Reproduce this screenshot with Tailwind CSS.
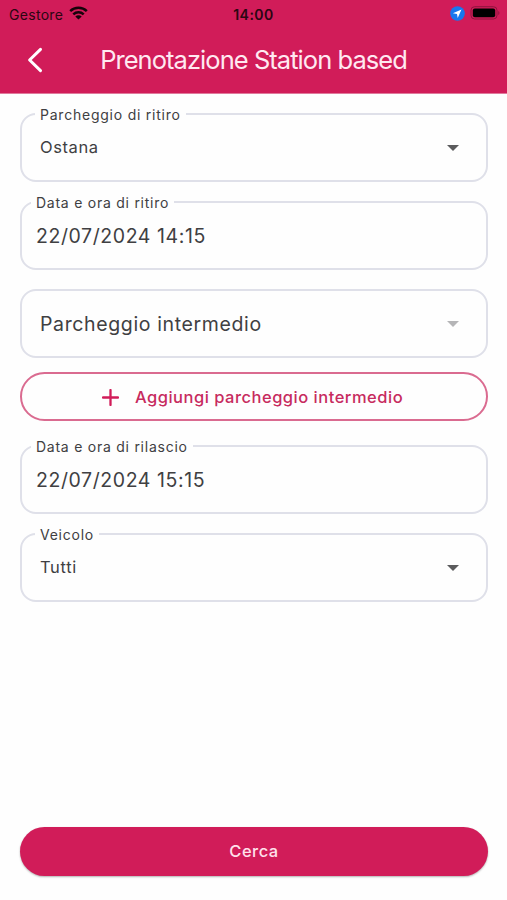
<!DOCTYPE html>
<html lang="it">
<head>
<meta charset="utf-8">
<title>Prenotazione Station based</title>
<script src="https://cdn.jsdelivr.net/npm/@tailwindcss/browser@4"></script>
</head>
<body class="bg-[#fefefe] font-[Inter,sans-serif] text-[#404042]">
<div class="flex h-[900px] w-[507px] flex-col overflow-hidden">
  <header class="h-[94px] shrink-0 border-b border-[#e0799c] bg-[#d11c59]">
    <div class="grid h-7 grid-cols-3 items-center pl-[9px] pr-[7px] text-[#2b0612]">
      <div class="flex items-center gap-[6px]">
        <span class="whitespace-nowrap text-[14px] tracking-[0.3px]">Gestore</span>
        <svg class="-mt-[3px] h-[14px] w-[19px]" viewBox="0 0 19 14" fill="none" stroke="#16030a" stroke-width="2.5"><path d="M1.2 5.1C5.8.6 13.2.6 17.8 5.1"/><path d="M4.3 8.3c2.9-2.8 7.5-2.8 10.4 0"/><path d="M9.5 13.6 6.3 10.5c1.8-1.6 4.6-1.6 6.4 0z" fill="#16030a" stroke="none"/></svg>
      </div>
      <div class="pr-[2px] text-center text-[14px] font-semibold tracking-[0.5px]">14:00</div>
      <div class="-mt-[2px] flex items-center justify-end gap-[5px]">
        <svg class="size-[15px]" viewBox="0 0 15 15"><circle cx="7.5" cy="7.5" r="7.3" fill="#1877ee"/><path d="M11.5 3.5 2.9 7.3l4.1.7.7 4.1z" fill="#fff"/></svg>
        <svg class="h-[14px] w-[30px]" viewBox="0 0 30 14"><rect x="1" y=".7" width="26" height="12.3" rx="3.6" fill="none" stroke="#8e143d" stroke-width="1"/><rect x="2.8" y="2.5" width="22.4" height="8.8" rx="2" fill="#000"/><path d="M28.3 5v4c1.5-.7 1.5-3.3 0-4z" fill="#8e143d"/></svg>
      </div>
    </div>
    <div class="relative flex h-[65px] items-center justify-center">
      <svg class="absolute left-[26px] top-[19px] h-[26px] w-[18px]" viewBox="0 0 18 26" fill="none" stroke="#fff" stroke-width="3" stroke-linecap="round" stroke-linejoin="round"><path d="M14.5 2.4 3.6 13l10.9 10.6"/></svg>
      <h1 class="-mt-px whitespace-nowrap text-[25.5px] leading-[30px] tracking-[-0.95px] text-[#ffe9f1]">Prenotazione Station based</h1>
    </div>
  </header>
  <main class="flex flex-1 flex-col pl-5 pr-[19px] pt-[19px]">
    <div class="relative flex h-[69px] shrink-0 items-center justify-between rounded-[16px] border-2 border-[#dfe0e9] pl-[18px] pr-[27px]">
      <label class="absolute -top-[10px] left-[13px] whitespace-nowrap bg-[#fefefe] px-[5px] text-[14px] leading-[20px] tracking-[0.77px]">Parcheggio di ritiro</label>
      <span class="text-[16.5px] tracking-[0.6px]">Ostana</span>
      <svg class="h-[6px] w-3" viewBox="0 0 12 6"><path d="M0 0h12L6 6z" fill="#5b5b5d"/></svg>
    </div>
    <div class="relative mt-[19px] flex h-[69px] shrink-0 items-center rounded-[16px] border-2 border-[#dfe0e9] pl-[14px] pt-[3px]">
      <label class="absolute -top-[10px] left-[9px] whitespace-nowrap bg-[#fefefe] px-[5px] text-[14px] leading-[20px] tracking-[0.75px]">Data e ora di ritiro</label>
      <span class="text-[19.5px] tracking-[0.58px]">22/07/2024 14:15</span>
    </div>
    <div class="mt-[19px] flex h-[69px] shrink-0 items-center justify-between rounded-[16px] border-2 border-[#dfe0e9] pl-[18px] pr-[27px]">
      <span class="pt-[2px] text-[19.5px] tracking-[0.63px]">Parcheggio intermedio</span>
      <svg class="h-[6px] w-3" viewBox="0 0 12 6"><path d="M0 0h12L6 6z" fill="#b5b5b7"/></svg>
    </div>
    <button class="mt-[14px] flex h-[49px] shrink-0 items-center justify-center gap-4 rounded-full border-2 border-[#da6b90] pr-[3px] pt-px text-[#c72b5e]">
      <svg class="size-[17px]" viewBox="0 0 17 17" stroke="#d11c59" stroke-width="2.3" stroke-linecap="round"><path d="M8.5 1v15M1 8.5h15"/></svg>
      <span class="text-[16.5px] font-medium tracking-[0.5px]">Aggiungi parcheggio intermedio</span>
    </button>
    <div class="relative mt-[24px] flex h-[69px] shrink-0 items-center rounded-[16px] border-2 border-[#dfe0e9] pl-[14px] pt-[3px]">
      <label class="absolute -top-[10px] left-[9px] whitespace-nowrap bg-[#fefefe] px-[5px] text-[14px] leading-[20px] tracking-[0.75px]">Data e ora di rilascio</label>
      <span class="text-[19.5px] tracking-[0.58px]">22/07/2024 15:15</span>
    </div>
    <div class="relative mt-[19px] flex h-[69px] shrink-0 items-center justify-between rounded-[16px] border-2 border-[#dfe0e9] pl-[18px] pr-[27px]">
      <label class="absolute -top-[10px] left-[13px] whitespace-nowrap bg-[#fefefe] px-[5px] text-[14px] leading-[20px] tracking-[0.75px]">Veicolo</label>
      <span class="text-[16.5px] tracking-[0.65px]">Tutti</span>
      <svg class="h-[6px] w-3" viewBox="0 0 12 6"><path d="M0 0h12L6 6z" fill="#5b5b5d"/></svg>
    </div>
    <button class="mb-6 mt-auto h-[49px] shrink-0 rounded-full bg-[#d11c59] text-[16.5px] font-medium tracking-[0.5px] text-[#ffe0eb] shadow-[0_1px_2px_rgba(0,0,0,0.3)]">Cerca</button>
  </main>
</div>
</body>
</html>
